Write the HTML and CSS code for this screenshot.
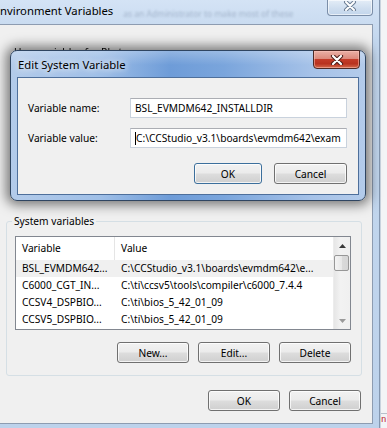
FILE: index.html
```html
<!DOCTYPE html>
<html lang="en">
<head>
    <meta charset="UTF-8">
    <title>Environment Variables</title>
    <link rel="stylesheet" href="styles.css">
</head>
<body>
<div class="desk">
    <div class="window">
        <div class="titlebar">
            <span class="title">nvironment Variables</span>
            <span class="ghost">as an Administrator to make most of these</span>
            <div class="close-btn">
                <svg width="14" height="10" viewBox="0 0 14 10">
                    <path d="M3 1 L11 9 M11 1 L3 9" stroke="#6d7f96" stroke-width="4" stroke-linecap="round"/>
                    <path d="M3 1 L11 9 M11 1 L3 9" stroke="#fff" stroke-width="2" stroke-linecap="round"/>
                </svg>
            </div>
        </div>

        <div class="client">
            <div class="user-label">User variables for Rbstu</div>

            <!-- 시스템 변수 -->
            <fieldset class="group">
                <legend>System variables</legend>
                <div class="listview">
                    <div class="list-body">
                        <div class="list-head">
                            <div class="cell">Variable</div>
                            <div class="cell">Value</div>
                        </div>
                        <div class="row hot">
                            <div class="cell">BSL_EVMDM642...</div>
                            <div class="cell">C:\CCStudio_v3.1\boards\evmdm642\e...</div>
                        </div>
                        <div class="row">
                            <div class="cell">C6000_CGT_IN...</div>
                            <div class="cell">C:\ti\ccsv5\tools\compiler\c6000_7.4.4</div>
                        </div>
                        <div class="row">
                            <div class="cell">CCSV4_DSPBIO...</div>
                            <div class="cell">C:\ti\bios_5_42_01_09</div>
                        </div>
                        <div class="row">
                            <div class="cell">CCSV5_DSPBIO...</div>
                            <div class="cell">C:\ti\bios_5_42_01_09</div>
                        </div>
                    </div>
                    <div class="scrollbar">
                        <div class="arrow">
                            <svg width="7" height="4" viewBox="0 0 7 4"><path d="M0 4 L3.5 0 L7 4 Z" fill="#3a3a3a"/></svg>
                        </div>
                        <div class="thumb"></div>
                        <div class="track"></div>
                        <div class="arrow">
                            <svg width="7" height="4" viewBox="0 0 7 4"><path d="M0 0 L7 0 L3.5 4 Z" fill="#9a9a9a"/></svg>
                        </div>
                    </div>
                </div>
                <div class="btn-row">
                    <button class="btn">New...</button>
                    <button class="btn">Edit...</button>
                    <button class="btn">Delete</button>
                </div>
            </fieldset>

            <div class="btn-row footer">
                <button class="btn">OK</button>
                <button class="btn">Cancel</button>
            </div>
        </div>
    </div>
    <div class="desk-edge"><span>n</span></div>

    <!-- 편집 대화상자 -->
    <div class="dialog">
        <div class="dlg-title">
            <span class="dlg-caption">Edit System Variable</span>
            <div class="dlg-close">
                <svg width="14" height="10" viewBox="0 0 14 10">
                    <path d="M3 1 L11 9 M11 1 L3 9" stroke="#4a1d18" stroke-width="4.2" stroke-linecap="round"/>
                    <path d="M3 1 L11 9 M11 1 L3 9" stroke="#fff" stroke-width="2.2" stroke-linecap="round"/>
                </svg>
            </div>
        </div>
        <div class="dlg-client">
            <div class="field-grid">
                <label>Variable name:</label>
                <div class="textbox">BSL_EVMDM642_INSTALLDIR</div>
                <label>Variable value:</label>
                <div class="textbox"><span class="caret"></span>C:\CCStudio_v3.1\boards\evmdm642\exam</div>
            </div>
            <div class="dlg-buttons">
                <button class="btn ok">OK</button>
                <button class="btn cancel">Cancel</button>
            </div>
        </div>
    </div>
</div>
</body>
</html>
```

FILE: styles.css
```css
* {
    box-sizing: border-box;
}

body {
    margin: 0;
    font-family: "Noto Sans", "Open Sans", sans-serif;
    font-size: 10.2px;
    color: #000;
    background: #eef1f5;
}

.desk {
    display: flex;
    width: 387px;
    height: 428px;
    position: relative;
    overflow: hidden;
}

/* 바깥 창 */
.window {
    width: 380px;
    height: 428px;
    flex: none;
    display: flex;
    flex-direction: column;
    padding: 0 6px 4px 0;
    border-right: 1px solid #8497b0;
    background: linear-gradient(#d4e3f5, #c3d7ee 40px, #bdd2eb);
}

.titlebar {
    height: 24px;
    display: flex;
    align-items: flex-start;
}

.title {
    font-size: 11.3px;
    line-height: 16px;
    padding-top: 3px;
    white-space: nowrap;
}

.ghost {
    margin: 8px 0 0 10px;
    font-size: 8.5px;
    white-space: nowrap;
    color: rgba(50, 70, 100, 0.28);
    filter: blur(0.8px);
}

.close-btn {
    flex: none;
    width: 46px;
    height: 16px;
    margin-left: auto;
    border: 1px solid #7b8ea8;
    border-top: none;
    border-radius: 0 0 4px 4px;
    background: linear-gradient(#e4edf7, #cfdeef 55%, #c2d5eb);
    box-shadow: inset 0 0 0 1px rgba(255, 255, 255, 0.6);
    display: flex;
    align-items: center;
    justify-content: center;
    padding-bottom: 4px;
}

.client {
    height: 400px;
    background: #f0f0f0;
    border: 1px solid #8d9cb1;
    border-left: none;
    display: flex;
    flex-direction: column;
}

.user-label {
    margin: 20px 0 0 14px;
    height: 14px;
    line-height: 14px;
    filter: blur(0.4px);
}

/* 그룹 상자 */
.group {
    margin: 155px 10px 0 6px;
    padding: 0 10px 12px 8px;
    border: 1px solid #d5dfe5;
    border-radius: 3px;
    min-width: 0;
}

.group legend {
    padding: 0 2px;
    margin-left: -3px;
    line-height: 14px;
}

.listview {
    margin-top: 8px;
    height: 94px;
    border: 1px solid #828790;
    background: #fff;
    display: flex;
}

.list-body {
    flex: 1;
    overflow: hidden;
}

.list-head {
    height: 23px;
    display: grid;
    grid-template-columns: 99px 1fr;
    line-height: 23px;
}

.list-head .cell:first-child {
    border-right: 1px solid #e5e5e5;
}

.row {
    height: 17px;
    display: grid;
    grid-template-columns: 99px 1fr;
    line-height: 17px;
}

.row.hot {
    background: #f0f0f0;
}

.cell {
    padding-left: 6px;
    white-space: nowrap;
    overflow: hidden;
}

.scrollbar {
    width: 17px;
    flex: none;
    display: flex;
    flex-direction: column;
    background: linear-gradient(to right, #e6e6e6, #f2f2f2 40%, #f0f0f0);
    border-left: 1px solid #ececec;
}

.arrow {
    height: 17px;
    display: flex;
    align-items: center;
    justify-content: center;
}

.thumb {
    height: 16px;
    margin: 1px 1px 0 0;
    border: 1px solid #979797;
    border-radius: 2px;
    background: linear-gradient(to right, #f4f4f4, #e8e8e8 50%, #dadada 51%, #d6d6d6);
}

.track {
    flex: 1;
}

/* 버튼 */
.btn-row {
    display: flex;
    justify-content: flex-end;
    gap: 9px;
    margin-top: 12px;
}

.btn-row.footer {
    margin: 14px 11px 0 0;
}

.btn {
    width: 72px;
    height: 21px;
    padding: 0;
    font: inherit;
    color: #000;
    border: 1px solid #707070;
    border-radius: 3px;
    background: linear-gradient(#f2f2f2 0%, #ebebeb 48%, #dddddd 52%, #cfcfcf 100%);
    box-shadow: inset 0 0 0 1px rgba(255, 255, 255, 0.75);
}

.desk-edge {
    flex: 1;
    display: flex;
    flex-direction: column;
    justify-content: flex-end;
    background: #f3f4f6;
    border-left: 1px solid #c9d3de;
}

.desk-edge span {
    color: #c0202a;
    font-family: "Liberation Mono", monospace;
    font-size: 9px;
    line-height: 12px;
    padding-bottom: 2px;
    border-top: 1px solid #b8c0ca;
}

/* 편집 대화상자 */
.dialog {
    position: absolute;
    left: 10px;
    top: 50px;
    width: 356px;
    height: 151px;
    border: 1px solid #2f4561;
    border-radius: 7px;
    display: flex;
    flex-direction: column;
    background:
        linear-gradient(rgba(255, 255, 255, 0.25), rgba(255, 255, 255, 0) 14px),
        linear-gradient(to right, #b3cbea 0%, #9fbfe7 25%, #6e9cd8 45%, #7aa5dc 60%, #a6c2e8 85%, #b3cbea 100%);
    box-shadow: 0 0 12px 4px rgba(0, 0, 0, 0.5);
}

.dlg-title {
    height: 26px;
    display: flex;
    align-items: center;
    padding-left: 7px;
}

.dlg-caption {
    font-size: 11.3px;
    text-shadow: 0 0 6px rgba(255, 255, 255, 0.95), 0 0 10px rgba(255, 255, 255, 0.7);
}

.dlg-close {
    margin: -1px 5px 0 auto;
    align-self: flex-start;
    width: 47px;
    height: 19px;
    border: 1px solid #4d2a26;
    border-radius: 0 0 4px 4px;
    background: linear-gradient(#eab0a6 0%, #dc8a7c 45%, #c33b28 50%, #b8321f 75%, #d56b4d 100%);
    box-shadow: inset 0 0 0 1px rgba(255, 200, 190, 0.5);
    display: flex;
    align-items: center;
    justify-content: center;
}

.dlg-client {
    flex: 1;
    margin: 0 6px 5px;
    padding: 20px 10px 0;
    border: 1px solid #4e6f9b;
    background: #f0f0f0;
}

.field-grid {
    display: grid;
    grid-template-columns: 102px 217px;
    row-gap: 10px;
    align-items: center;
}

.textbox {
    height: 20px;
    padding-left: 4px;
    line-height: 18px;
    border: 1px solid #c9d2dd;
    border-top-color: #abadb3;
    background: #fff;
    white-space: nowrap;
    overflow: hidden;
}

.caret {
    display: inline-block;
    width: 1px;
    height: 13px;
    background: #000;
    vertical-align: -3px;
}

.dlg-buttons {
    display: flex;
    justify-content: flex-end;
    gap: 12px;
    margin: 15px 1px 0 0;
}

.dlg-buttons .ok {
    width: 68px;
    border-color: #3c6f9c;
}

.dlg-buttons .cancel {
    width: 73px;
}
```
